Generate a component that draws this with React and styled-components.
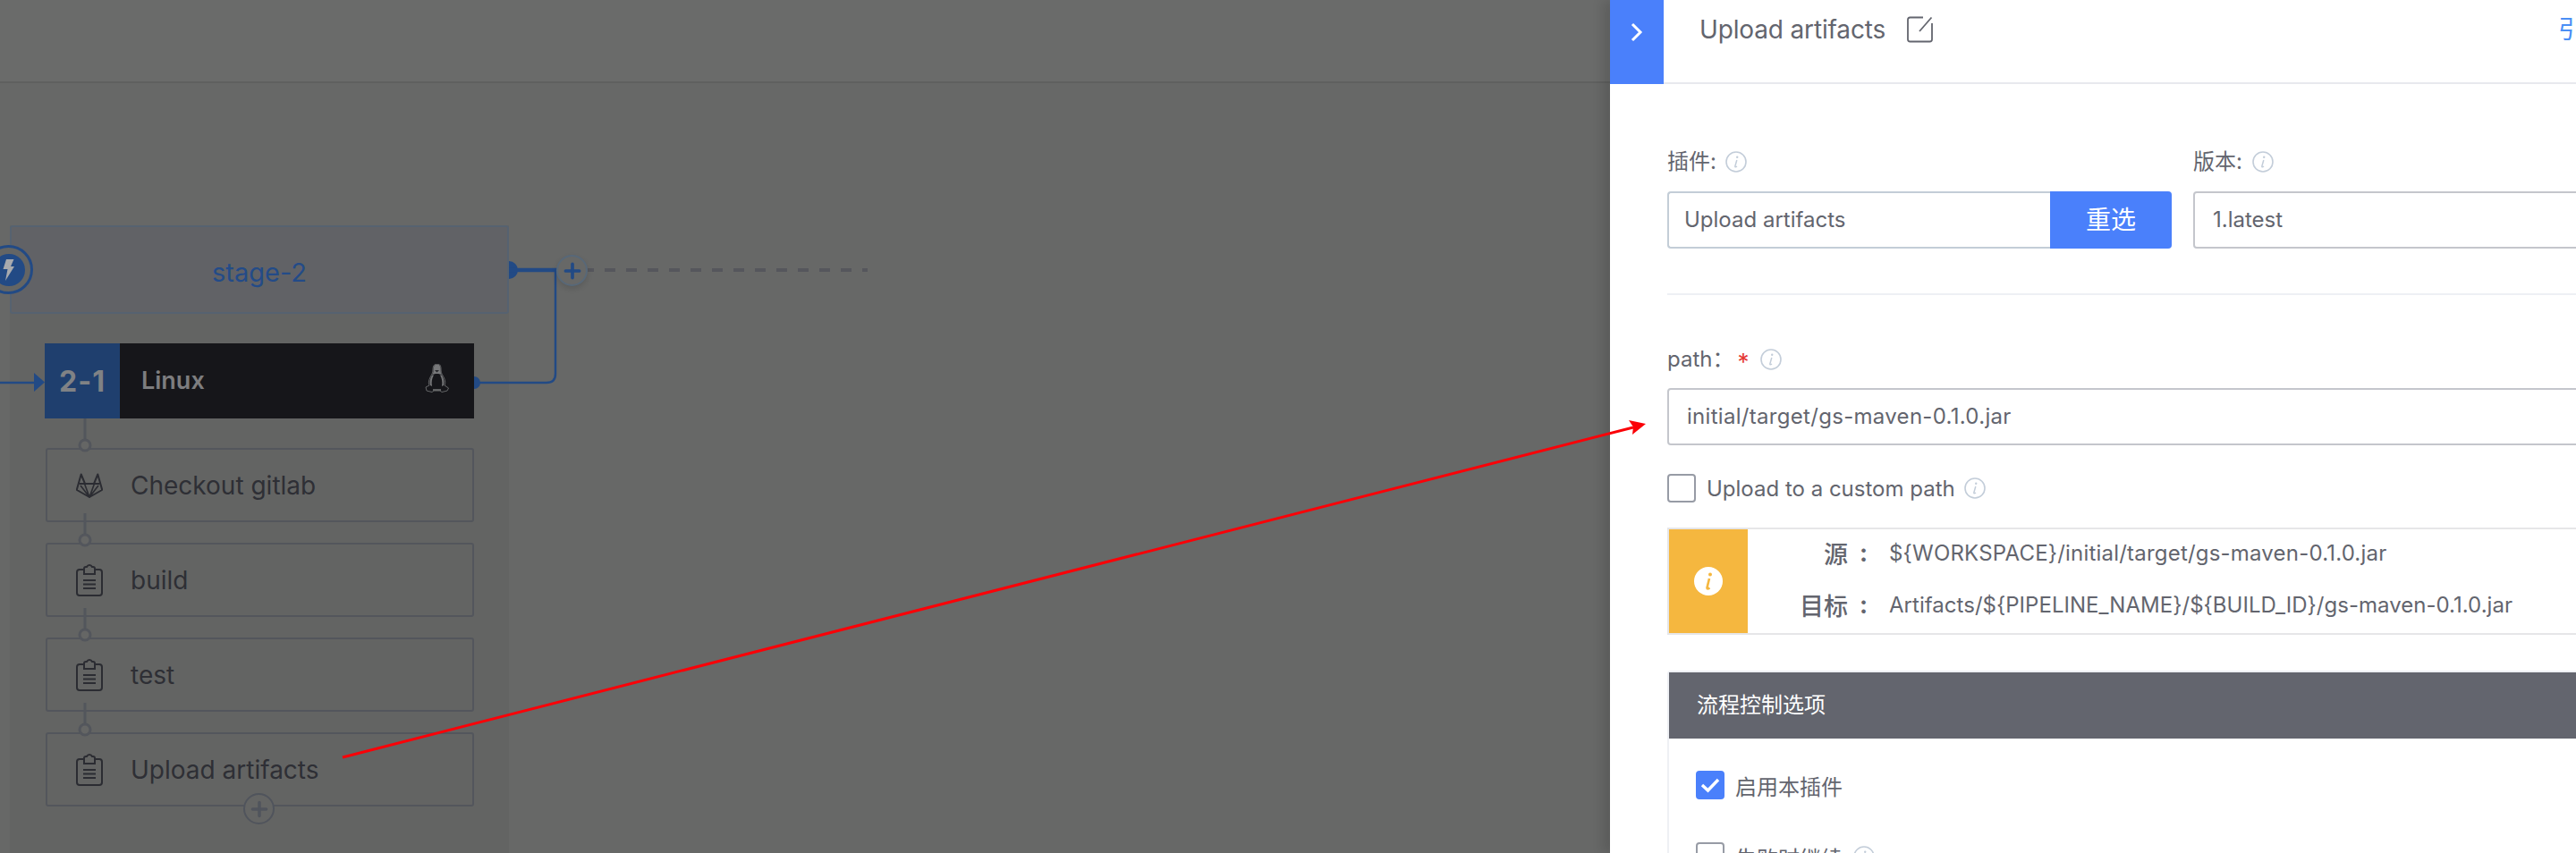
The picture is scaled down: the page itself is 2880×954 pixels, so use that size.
import React from "react";
import styled, { createGlobalStyle } from "styled-components";
import { Plus } from "lucide-react";

const GlobalStyle = createGlobalStyle`
  html, body {
    margin: 0;
    padding: 0;
    background: #676867;
    font-family: Inter, "Noto Sans CJK SC", sans-serif;
  }
  * { box-sizing: border-box; }
`;

const Page = styled.div`
  position: relative;
  display: flex;
  width: 2880px;
  height: 954px;
  overflow: hidden;
`;

const Stage = styled.div`
  position: relative;
  flex: 0 0 1800px;
  height: 954px;
  background: #676867;
`;

const TopBar = styled.div`
  height: 93px;
  background: #6a6b6a;
  border-bottom: 2px solid #5f605f;
`;

const StageColumn = styled.div`
  width: 558px;
  height: 702px;
  margin: 159px 0 0 11px;
  background: #636463;
`;

const StageHead = styled.div`
  display: flex;
  align-items: center;
  justify-content: center;
  height: 99px;
  padding-top: 5px;
  background: #616266;
  border: 2px solid #566270;
  border-radius: 3px;
  color: #234b88;
  font-size: 29px;
`;

const Job = styled.div`
  display: flex;
  width: 480px;
  height: 84px;
  margin: 33px 0 0 39px;
  background: #16161a;
`;

const JobNumber = styled.div`
  display: flex;
  flex: 0 0 84px;
  align-items: center;
  justify-content: center;
  background: #1f3f6e;
  color: #808285;
  font-size: 32px;
  font-weight: 700;
  letter-spacing: 1px;
`;

const JobName = styled.div`
  flex: 1;
  padding-left: 24px;
  color: #7d7d7f;
  font-size: 27px;
  font-weight: 600;
  line-height: 84px;
`;

const Tux = styled.svg`
  width: 27px;
  height: 32px;
  margin: 23px 28px 0 0;
`;

const Steps = styled.div`
  display: flex;
  flex-direction: column;
  gap: 23px;
  margin: 33px 0 0 40px;
`;

const StepCard = styled.div`
  display: flex;
  align-items: center;
  width: 479px;
  height: 83px;
  padding-left: 32px;
  border: 2px solid #53565c;
  border-radius: 3px;
  color: #2e2f35;
  font-size: 28px;
`;

const StepIcon = styled.svg`
  flex: 0 0 30px;
  width: 30px;
  height: ${(p) => p.$h}px;
  margin-right: 31px;
  fill: none;
  stroke: #2b2c32;
  stroke-width: 2;
`;

const Wires = styled.svg`
  position: absolute;
  top: 0;
  left: 0;
  width: 1000px;
  height: 954px;
`;

const TriggerRing = styled.div`
  position: absolute;
  top: 274px;
  left: -18px;
  display: flex;
  align-items: center;
  justify-content: center;
  width: 55px;
  height: 55px;
  background: #646564;
  border: 3px solid #224a85;
  border-radius: 50%;
`;

const TriggerDot = styled.div`
  display: flex;
  align-items: center;
  justify-content: center;
  width: 36px;
  height: 36px;
  background: #224a85;
  border-radius: 50%;
`;

const AddButton = styled.div`
  position: absolute;
  top: ${(p) => p.$top}px;
  left: ${(p) => p.$left}px;
  display: flex;
  align-items: center;
  justify-content: center;
  width: 35px;
  height: 35px;
  background: ${(p) => p.$bg};
  border: 2px solid ${(p) => p.$line};
  border-radius: 50%;
  color: ${(p) => p.$color};
  box-shadow: ${(p) => p.$shadow || "none"};
`;

const Panel = styled.div`
  position: relative;
  flex: 0 0 1400px;
  height: 954px;
  background: #fff;
  box-shadow: -8px 0 12px rgba(0, 0, 0, 0.12);
  color: #63656e;
`;

const PanelHeader = styled.div`
  display: flex;
  align-items: flex-start;
  height: 94px;
  border-bottom: 2px solid #e8e9ee;
  font-size: 28px;
`;

const CollapseTab = styled.div`
  display: flex;
  flex: 0 0 60px;
  justify-content: center;
  height: 94px;
  padding-top: 25px;
  background: #4a80fb;
`;

const PanelTitle = styled.div`
  margin: 13px 0 0 40px;
  letter-spacing: -0.15px;
  line-height: 40px;
`;

const EditIcon = styled.svg`
  width: 29px;
  height: 30px;
  margin: 18px 0 0 24px;
`;

const RefLink = styled.div`
  margin: 13px 0 0 auto;
  padding-right: 284px;
  color: #4a8ef5;
  line-height: 40px;
`;

const PanelBody = styled.div`
  padding: 71px 0 0 64px;
  font-size: 24px;
`;

const PluginRow = styled.div`
  display: grid;
  grid-template-columns: 564px 1fr;
  column-gap: 24px;
`;

const FieldLabel = styled.div`
  display: flex;
  align-items: center;
  height: 32px;
  margin-bottom: ${(p) => p.$mb}px;
  line-height: 32px;
`;

const Gap = styled.span`
  display: inline-block;
  width: ${(p) => p.$w}px;
`;

const Star = styled.span`
  color: #e53935;
  font-size: 26px;
  line-height: 32px;
  margin: 6px 13px 0 0;
`;

const InfoIcon = styled.svg`
  flex: 0 0 24px;
  width: 24px;
  height: 24px;
  margin-left: ${(p) => p.$ml || 0}px;
`;

const InputGroup = styled.div`
  display: flex;
  height: 64px;
`;

const TextBox = styled.div`
  flex: 1;
  height: 64px;
  padding-left: ${(p) => p.$pad}px;
  border: 2px solid ${(p) => p.$line || "#c4c6cc"};
  border-right-width: ${(p) => (p.$joined ? 0 : 2)}px;
  border-radius: ${(p) => (p.$joined ? "4px 0 0 4px" : "4px")};
  font-size: 24px;
  letter-spacing: ${(p) => p.$ls || 0}px;
  line-height: 60px;
`;

const PickButton = styled.div`
  flex: 0 0 136px;
  background: #4a80fb;
  border-radius: 0 4px 4px 0;
  color: #fff;
  font-size: 28px;
  line-height: 64px;
  text-align: center;
`;

const Divider = styled.div`
  height: 2px;
  margin: 50px 0 56px;
  background: #eef0f4;
`;

const CheckRow = styled.div`
  display: flex;
  align-items: center;
  height: 32px;
  margin-top: ${(p) => p.$mt}px;
`;

const CheckBox = styled.div`
  display: flex;
  flex: 0 0 32px;
  align-items: center;
  justify-content: center;
  width: 32px;
  height: 32px;
  margin-right: 12px;
  background: ${(p) => (p.$on ? "#4a80fb" : "#fff")};
  border: ${(p) => (p.$on ? "0" : "2px solid #979ba5")};
  border-radius: 4px;
`;

const PathBox = styled.div`
  display: flex;
  height: 120px;
  margin-top: 28px;
  border: 2px solid #e6e6e8;
`;

const PathFlag = styled.div`
  display: flex;
  flex: 0 0 88px;
  align-items: center;
  justify-content: center;
  background: #f5b73f;
`;

const PathRows = styled.div`
  display: flex;
  flex-direction: column;
  gap: 6px;
  padding-bottom: 6px;
`;

const PathRow = styled.div`
  display: grid;
  grid-template-columns: 112px 46px 1fr;
  align-items: center;
  height: 52px;
`;

const PathKey = styled.div`
  font-size: 27px;
  font-weight: 500;
  text-align: right;
`;

const PathColon = styled.div`
  padding-left: 13px;
  font-size: 27px;
  font-weight: 700;
`;

const PathValue = styled.div`
  letter-spacing: ${(p) => p.$ls}px;
`;

const ControlSection = styled.div`
  margin-top: 40px;
  padding: 0 0 60px;
  border: 2px solid #eef0f4;
  border-radius: 4px 0 0 0;
`;

const ControlHead = styled.div`
  height: 74px;
  padding-left: 31px;
  background: #63656e;
  color: #fff;
  line-height: 74px;
`;

const ControlBody = styled.div`
  padding: 36px 0 0 30px;
`;

const RedArrow = styled.svg`
  position: absolute;
  top: 0;
  left: 0;
  width: 2880px;
  height: 954px;
  pointer-events: none;
`;

const Info = ({ ml }) => (
  <InfoIcon $ml={ml} viewBox="0 0 24 24" fill="none">
    <circle cx="12" cy="12" r="11" stroke="#c3cdd9" strokeWidth="1.6" />
    <path d="M12.8 10 L10.8 17 Q10.8 18.6 13 17" stroke="#c3cdd9" strokeWidth="1.5" />
    <circle cx="13.2" cy="6.8" r="1.2" fill="#c3cdd9" />
  </InfoIcon>
);

const Clipboard = () => (
  <StepIcon $h={36} viewBox="0 0 30 36">
    <path d="M9 6 H4 Q1 6 1 9 V32 Q1 35 4 35 H26 Q29 35 29 32 V9 Q29 6 26 6 H21" />
    <path d="M9 11 V5 Q9 3 11 3 H12 Q13 1 15 1 Q17 1 18 3 H19 Q21 3 21 5 V11 Z" />
    <path d="M8 18 H22 M8 22.5 H22 M8 27 H22" />
  </StepIcon>
);

const Gitlab = () => (
  <StepIcon $h={28} viewBox="0 0 30 28">
    <path d="M15 27 L1 19 V18 L5.7 1.5 L10 12 H20 L24.3 1.5 L29 18 V19 Z" strokeLinejoin="round" />
    <path d="M3.6 12 H26.4" />
    <path d="M15 27 L9.5 12 M15 27 L20.5 12 M15 27 L5 14 M15 27 L25 14" strokeWidth="1.6" />
  </StepIcon>
);

const steps = [
  { name: "Checkout gitlab", icon: <Gitlab /> },
  { name: "build", icon: <Clipboard /> },
  { name: "test", icon: <Clipboard /> },
  { name: "Upload artifacts", icon: <Clipboard /> },
];

const ringRows = [498, 604, 710, 816];

function App() {
  return (
    <Page>
      <GlobalStyle />
      <Stage>
        <TopBar />
        <StageColumn>
          <StageHead>stage-2</StageHead>
          <Job>
            <JobNumber>2-1</JobNumber>
            <JobName>Linux</JobName>
            <Tux viewBox="0 0 27 32">
              <path d="M13.5 0 C10 0 9 3 9 7 C9 10 8 11 6 15 C4 19 4 22 5 24 L1 26 L2 30 L8 31.5 L10 30 H17 L19 31.5 L25 30 L26.5 27 L22 24 C23.5 21 22.5 17 20 13 C18.5 10.5 18 9 18 6 C18 2 17 0 13.5 0 Z" fill="#16161a" stroke="#77787a" strokeWidth="0.8" />
              <path d="M13.5 0.5 C10.5 0.5 9.6 3 9.6 7 C9.6 9 9.2 10.5 8 12.5 C10 10.5 17 10.5 19 12.5 C18 10.5 17.6 9 17.6 6 C17.6 2.5 16.5 0.5 13.5 0.5 Z" fill="#77787a" />
              <path d="M11 7 H16 L13.5 9.5 Z" fill="#26262a" />
              <path d="M8 12.5 C5.5 17 5 21 6 24 L8 25 C7 20 8 16 10 12.5 Z M19 12.5 C21.5 17 22 21 21 24 L19 25 C20 20 19 16 17 12.5 Z" fill="#77787a" />
              <path d="M9 29 H18" stroke="#77787a" strokeWidth="1.5" />
            </Tux>
          </Job>
          <Steps>
            {steps.map((step) => (
              <StepCard key={step.name}>
                {step.icon}
                {step.name}
              </StepCard>
            ))}
          </Steps>
        </StageColumn>

        <Wires viewBox="0 0 1000 954" fill="none">
          <path d="M569 292 A10 10 0 0 1 569 312 Z" fill="#224a85" />
          <path d="M569 302 H624" stroke="#224a85" strokeWidth="4.5" />
          <path d="M657 302 H970" stroke="#55565c" strokeWidth="4" strokeDasharray="12 12" strokeDashoffset="5" />
          <path d="M621 302 V418 Q621 428 611 428 H530" stroke="#224a85" strokeWidth="2.5" />
          <path d="M530 421 A7 7 0 0 1 530 435 Z" fill="#224a85" />
          <path d="M0 428 H40" stroke="#224a85" strokeWidth="2.5" />
          <path d="M38 417 L50 427.5 L38 438 Z" fill="#224a85" />
          {ringRows.map((y) => (
            <g key={y}>
              <path d={`M95 ${y - 30} V${y - 6}`} stroke="#53565c" strokeWidth="3" />
              <circle cx="95" cy={y} r="6" fill="#656665" stroke="#53565c" strokeWidth="3" />
            </g>
          ))}
        </Wires>

        <TriggerRing>
          <TriggerDot>
            <svg width="15" height="24" viewBox="0 0 15 24">
              <path d="M5 0 H13.5 L10 8 H14 L4 24 L6.5 11 H1.5 Z" fill="#a8aaae" />
            </svg>
          </TriggerDot>
        </TriggerRing>
        <AddButton $top={285} $left={622} $bg="#676867" $line="#586878" $color="#224a85" $shadow="0 3px 6px rgba(0,0,0,.12)">
          <Plus size={26} strokeWidth={3.4} />
        </AddButton>
        <AddButton $top={887} $left={272} $bg="#646564" $line="#50545c" $color="#50545c">
          <Plus size={26} strokeWidth={3.2} />
        </AddButton>
      </Stage>

      <Panel>
        <PanelHeader>
          <CollapseTab>
            <svg width="16" height="22" viewBox="0 0 16 22" fill="none">
              <path d="M3 2 L12 11 L3 20" stroke="#fff" strokeWidth="3" />
            </svg>
          </CollapseTab>
          <PanelTitle>Upload artifacts</PanelTitle>
          <EditIcon viewBox="0 0 29 30" fill="none" stroke="#63656e" strokeWidth="1.8">
            <path d="M18 1.5 H3.5 Q1 1.5 1 4 V26 Q1 28.5 3.5 28.5 H25.5 Q28 28.5 28 26 V8" />
            <path d="M27.5 1.5 L14 17" />
          </EditIcon>
          <RefLink>引用</RefLink>
        </PanelHeader>

        <PanelBody>
          <PluginRow>
            <div>
              <FieldLabel $mb={17}>
                插件:
                <Info ml={10} />
              </FieldLabel>
              <InputGroup>
                <TextBox $pad={17} $line="#c3cdd7" $joined>Upload artifacts</TextBox>
                <PickButton>重选</PickButton>
              </InputGroup>
            </div>
            <div>
              <FieldLabel $mb={17}>
                版本:
                <Info ml={11} />
              </FieldLabel>
              <TextBox $pad={20}>1.latest</TextBox>
            </div>
          </PluginRow>

          <Divider />

          <FieldLabel $mb={16}>
            path：
            <Gap $w={4} />
            <Star>*</Star>
            <Info />
          </FieldLabel>
          <TextBox $pad={20} $ls={0.3}>initial/target/gs-maven-0.1.0.jar</TextBox>

          <CheckRow $mt={32}>
            <CheckBox />
            Upload to a custom path
            <Info ml={10} />
          </CheckRow>

          <PathBox>
            <PathFlag>
              <svg width="32" height="32" viewBox="0 0 32 32">
                <circle cx="16" cy="16" r="16" fill="#fff" />
                <path d="M17 13 L14.5 23.5 Q14.5 25.5 17.5 23.5" fill="none" stroke="#f5b73f" strokeWidth="2.6" />
                <circle cx="18" cy="8.5" r="2" fill="#f5b73f" />
              </svg>
            </PathFlag>
            <PathRows>
              <PathRow>
                <PathKey>源</PathKey>
                <PathColon>:</PathColon>
                <PathValue $ls={0.2}>{"${WORKSPACE}/initial/target/gs-maven-0.1.0.jar"}</PathValue>
              </PathRow>
              <PathRow>
                <PathKey>目标</PathKey>
                <PathColon>:</PathColon>
                <PathValue $ls={0.03}>{"Artifacts/${PIPELINE_NAME}/${BUILD_ID}/gs-maven-0.1.0.jar"}</PathValue>
              </PathRow>
            </PathRows>
          </PathBox>

          <ControlSection>
            <ControlHead>流程控制选项</ControlHead>
            <ControlBody>
              <CheckRow $mt={0}>
                <CheckBox $on>
                  <svg width="22" height="18" viewBox="0 0 22 18" fill="none">
                    <path d="M2 9 L8.5 15 L20 3" stroke="#fff" strokeWidth="3.4" />
                  </svg>
                </CheckBox>
                启用本插件
              </CheckRow>
              <CheckRow $mt={48}>
                <CheckBox />
                失败时继续
                <Info ml={12} />
              </CheckRow>
            </ControlBody>
          </ControlSection>
        </PanelBody>
      </Panel>

      <RedArrow viewBox="0 0 2880 954" fill="none">
        <path d="M383 847 L1826 478" stroke="#fb0007" strokeWidth="3" />
        <path d="M1840 474 L1821 470 L1826 477.5 L1825 486 Z" fill="#fb0007" />
      </RedArrow>
    </Page>
  );
}

export default App;
